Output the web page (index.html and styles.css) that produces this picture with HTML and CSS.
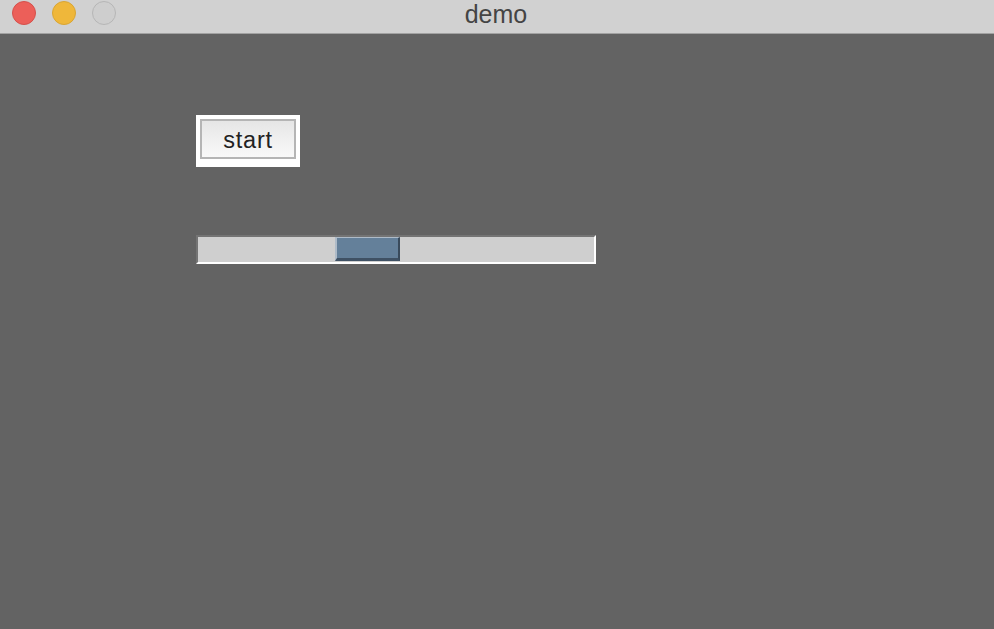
FILE: index.html
```html
<!DOCTYPE html>
<html>
<head>
<meta charset="utf-8">
<link rel="stylesheet" href="styles.css">
</head>
<body>
<div class="titlebar">
  <div class="lights">
    <span class="light red"></span>
    <span class="light yellow"></span>
    <span class="light gray"></span>
  </div>
  <div class="title">demo</div>
  <div></div>
</div>
<main class="content">
  <div class="btn-frame">
    <button class="btn">start</button>
  </div>
  <div class="scrollbar">
    <div class="trough">
      <div class="thumb"></div>
    </div>
  </div>
</main>
</body>
</html>
```
FILE: styles.css
```css
html, body {
  margin: 0;
  padding: 0;
  height: 100%;
  background: #636363;
  font-family: "Liberation Sans", Arial, sans-serif;
}
.titlebar {
  height: 33px;
  background: #d1d1d1;
  border-bottom: 1px solid #a2a2a2;
  display: grid;
  grid-template-columns: 1fr auto 1fr;
  align-items: start;
}
.lights {
  display: flex;
  gap: 16px;
  padding: 1px 0 0 12px;
}
.light {
  width: 22px;
  height: 22px;
  border-radius: 50%;
  border: 1px solid;
  display: block;
}
.red { background: #ec5f59; border-color: #d5504b; }
.yellow { background: #efb73a; border-color: #d9a533; }
.gray { background: #cecece; border-color: #b6b6b6; }
.title {
  font-size: 25px;
  line-height: 29px;
  color: #444444;
  padding-right: 2px;
}
.content {
  padding: 81px 0 0 196px;
  display: flex;
  flex-direction: column;
  align-items: flex-start;
}
.btn-frame {
  background: #ffffff;
  padding: 4px 4px 8px 4px;
  display: flex;
}
.btn {
  width: 96px;
  height: 40px;
  margin: 0;
  border: 2px solid #b5b5b5;
  background: linear-gradient(#e6e6e6, #f9f9f9);
  font-family: "Liberation Sans", Arial, sans-serif;
  font-size: 23.5px;
  letter-spacing: 0.8px;
  color: #222222;
  padding: 3px 0 0 0;
  display: flex;
  align-items: center;
  justify-content: center;
}
.scrollbar {
  margin-top: 68px;
  width: 396px;
  height: 25px;
  border-top: 2px solid #747474;
  border-left: 2px solid #747474;
  border-bottom: 2px solid #ffffff;
  border-right: 2px solid #ffffff;
  background: #cfcfcf;
}
.trough {
  display: flex;
  height: 100%;
}
.thumb {
  margin-left: 137px;
  width: 61px;
  height: 20px;
  background: #64809a;
  border-left: 2px solid #aebbc8;
  border-top: 1px solid #aebbc8;
  border-right: 2px solid #394a5b;
  border-bottom: 3px solid #3f5164;
}
```
